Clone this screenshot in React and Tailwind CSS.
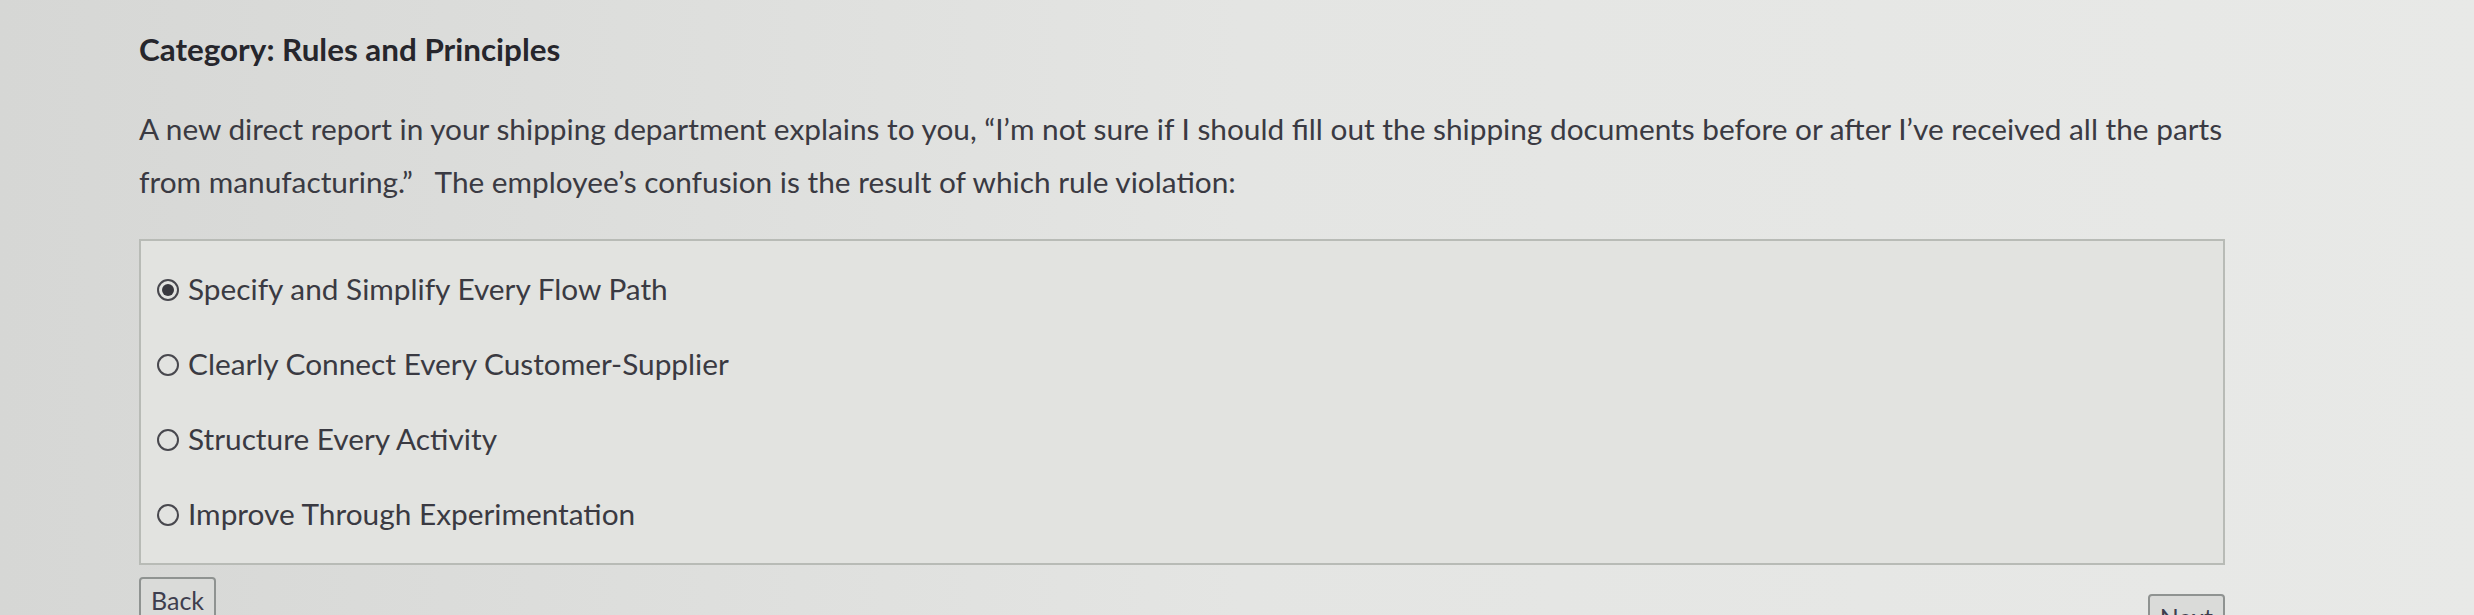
import React, { useState } from 'react';

const options = [
  'Specify and Simplify Every Flow Path',
  'Clearly Connect Every Customer-Supplier',
  'Structure Every Activity',
  'Improve Through Experimentation',
];

function App() {
  const [selected, setSelected] = useState(0);

  return (
    <div className="min-h-[615px] w-full overflow-hidden bg-gradient-to-r from-[#d6d7d5] via-[#e4e5e3] to-[#e8e9e7] text-[#3a3a42] font-['Lato','Liberation_Sans',sans-serif]">
      <div className="w-[2086px] ml-[139px] pt-[28px]">
        <h2 className="text-[31.4px] leading-[42px] font-bold text-[#26262c]">Category: Rules and Principles</h2>
        <p className="mt-[32px] text-[29.8px] leading-[53px]">
          A new direct report in your shipping department explains to you, “I’m not sure if I should fill out the shipping documents before or after I’ve received all the parts from manufacturing.”&nbsp;&nbsp; The employee’s confusion is the result of which rule violation:
        </p>
        <div className="mt-[31px] border-2 border-[#b8bbb6] bg-[#e2e3e0] pt-[11px] pb-[11px] pl-[16px]">
          {options.map((opt, i) => (
            <label key={i} className="flex items-center h-[75px] text-[29.8px] cursor-pointer">
              <span className="w-[22px] h-[22px] rounded-full border-2 border-[#48484e] flex items-center justify-center mr-[9px]">
                {selected === i && <span className="w-[12px] h-[12px] rounded-full bg-[#38383e]" />}
              </span>
              <input type="radio" className="hidden" checked={selected === i} onChange={() => setSelected(i)} />
              {opt}
            </label>
          ))}
        </div>
        <div className="flex justify-between items-start mt-[12px]">
          <button className="h-[48px] px-[10px] rounded-[4px] border-2 border-[#8f9391] bg-[#dadbd9] text-[25px] text-[#3e3e4e]">Back</button>
          <button className="mt-[17px] h-[48px] px-[10px] rounded-[4px] border-2 border-[#8f9391] bg-[#dadbd9] text-[25px] text-[#3e3e4e]">Next</button>
        </div>
      </div>
    </div>
  );
}

export default App;
